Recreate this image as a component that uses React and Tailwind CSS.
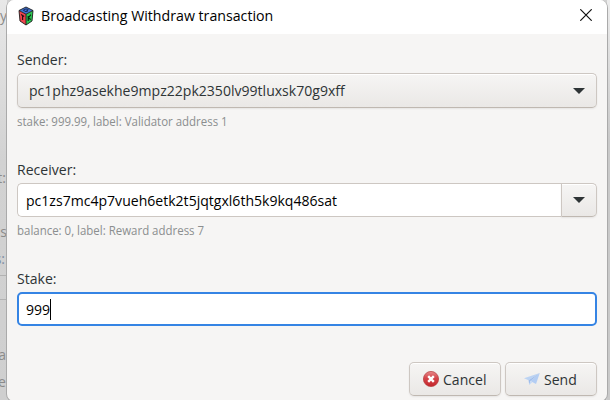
function GtkLogo() {
  return (
    <svg width="16" height="20" viewBox="0 0 16 20" className="shrink-0">
      <path d="M8 1 15 4.5 8 8.2 1 4.5Z" fill="#3f74d8" />
      <path d="M1 4.5 8 8.2V19L2 15Z" fill="#f0444c" />
      <path d="M15 4.5 8 8.2V19L14 15Z" fill="#2cc552" />
      <path d="M8 1 15 4.5 14 15 8 19 2 15 1 4.5ZM1 4.5 8 8.2 15 4.5M8 8.2V19" fill="none" stroke="#1c1c1c" strokeWidth="0.9" />
      <path d="M10.5 3.6 8 2.9 5.3 4.2 8 5.8 10 4.8 8.4 4.3" fill="none" stroke="#14234d" strokeWidth="0.9" />
      <path d="M3 8.6 6.2 10.4M4.6 9.6V14" stroke="#2c1012" strokeWidth="1.2" />
      <path d="M10.2 10V15M12.8 8.6 10.4 12 12.8 13.6" fill="none" stroke="#0a2b12" strokeWidth="1.2" />
    </svg>
  );
}

function Arrow() {
  return (
    <svg width="12" height="6" viewBox="0 0 12 6" className="shrink-0">
      <path d="M0 0H12L6 6Z" fill="#2e3436" />
    </svg>
  );
}

function CancelIcon() {
  return (
    <svg width="16" height="16" viewBox="0 0 16 16" className="shrink-0">
      <defs>
        <linearGradient id="red" x1="0" y1="0" x2="0" y2="1">
          <stop offset="0" stopColor="#e8898b" />
          <stop offset="0.45" stopColor="#d4454a" />
          <stop offset="1" stopColor="#c4262b" />
        </linearGradient>
      </defs>
      <circle cx="8" cy="8" r="7.6" fill="url(#red)" stroke="#b5393b" strokeWidth="0.7" />
      <path d="M5.2 5.2 10.8 10.8M10.8 5.2 5.2 10.8" stroke="#fff" strokeWidth="2.4" />
    </svg>
  );
}

function PlaneIcon() {
  return (
    <svg width="16" height="14" viewBox="0 0 16 14" className="shrink-0">
      <path d="M0 6.2 15.8 1 4.6 8.2Z" fill="#bcd3f3" />
      <path d="M15.8 1 6.4 9 12 12Z" fill="#b3cdf3" />
      <path d="M4.6 8.2 15.8 1 6.4 9 5.2 13Z" fill="#9dbdec" />
      <path d="M5.2 13 6.4 9 8.3 10.2Z" fill="#c6daf6" />
    </svg>
  );
}

const buttonFace =
  "border border-[#cdc7c2] border-b-[#bfb8b1] bg-linear-to-b from-[#f6f5f4] to-[#eae8e6] shadow-[inset_0_1px_0_#fff,0_1px_2px_rgba(0,0,0,0.07)]";

const narrow = "inline-block origin-left scale-x-[0.937]";
const narrowSmall = "inline-block origin-left scale-x-[0.917]";

export default function App() {
  return (
    <div className="relative h-[400px] w-[610px] overflow-hidden bg-[#d0d0d0] font-['Open_Sans','Noto_Sans',sans-serif] text-[15px] text-[#2e3436]">
      <div className="absolute inset-y-0 left-0 w-[7px] overflow-hidden bg-linear-to-b from-[#e8e8e8] via-[#d2d2d2] via-40% to-[#cfcfcf] text-[14px] leading-5 text-[#8b8b8b]">
        <span className="absolute top-[6px] right-0">y</span>
        <span className="absolute top-[168px] right-[1px]">t:</span>
        <span className="absolute top-[222px] right-0">s</span>
        <span className="absolute top-[249px] right-[2px] text-[#7f8fa4]">s:</span>
        <div className="absolute top-[275px] h-[25px] w-full border-y border-[#b2b2b2]" />
        <span className="absolute top-[345px] right-[1px]">a</span>
        <span className="absolute top-[372px] left-[-2px]">er</span>
      </div>
      <div className="absolute inset-y-0 right-0 w-[3px] bg-linear-to-b from-[#ececec] to-[#c9c9c9] to-35%" />

      <div className="relative ml-[6px] h-[402px] w-[602px] overflow-hidden rounded-[8px] border border-t-0 border-[#aaaaaa] bg-[#f6f5f4] whitespace-nowrap">
        <header className="flex h-[34px] items-center bg-white pr-[15px] pl-[11px] text-black">
          <div className="-mt-[3px] h-5">
            <GtkLogo />
          </div>
          <h1 className="-mt-[3px] ml-[7px] flex-1"><span className="inline-block origin-left scale-x-[0.945]">Broadcasting Withdraw transaction</span></h1>
          <svg width="12" height="12" viewBox="0 0 12 12" className="-mt-1">
            <path d="M0.3 0.3 11.7 11.7M11.7 0.3 0.3 11.7" stroke="#111" strokeWidth="1.2" />
          </svg>
        </header>

        <main className="px-[10px] pt-[15px]">
          <label className="block h-6 leading-[20px]"><span className={narrow}>Sender:</span></label>
          <div className={`flex h-[35px] items-center rounded-[5px] pr-[11px] pl-[11px] ${buttonFace}`}>
            <div className="flex-1"><span className={narrow}>pc1phz9asekhe9mpz22pk2350lv99tluxsk70g9xff</span></div>
            <Arrow />
          </div>
          <p className="h-[52px] pt-[5px] text-[12.5px] leading-[18px] text-[#8b8e8f]"><span className={narrowSmall}>stake: 999.99, label: Validator address 1</span></p>

          <label className="block h-[23px] leading-[18px]"><span className={narrow}>Receiver:</span></label>
          <div className="flex h-[34px]">
            <div className="flex flex-1 items-center rounded-l-[5px] border border-r-0 border-[#cdc7c2] bg-white pl-2 text-black">
              <span className={narrow}>pc1zs7mc4p7vueh6etk2t5jqtgxl6th5k9kq486sat</span>
            </div>
            <div className={`flex w-9 items-center justify-center rounded-r-[5px] ${buttonFace}`}>
              <Arrow />
            </div>
          </div>
          <p className="h-[52px] pt-[5px] text-[12.5px] leading-[18px] text-[#8b8e8f]"><span className={narrowSmall}>balance: 0, label: Reward address 7</span></p>

          <label className="block h-[23px] leading-[18px]"><span className={narrow}>Stake:</span></label>
          <div className="flex h-[34px] items-center rounded-[5px] border-2 border-[#3584e4] bg-white pl-[7px] text-black">
            <span className={narrow}>999</span>
            <i className="-ml-[2px] h-[21px] w-px bg-black" />
          </div>

          <footer className="mt-[36px] flex justify-end gap-[4px]">
            <button className={`flex h-[34px] w-[92px] items-center rounded-[5px] pl-[13px] ${buttonFace}`}>
              <CancelIcon />
              <span className={`ml-[4px] ${narrow}`}>Cancel</span>
            </button>
            <button className={`flex h-[34px] w-[92px] items-center rounded-[5px] pl-[18px] ${buttonFace}`}>
              <PlaneIcon />
              <span className={`ml-[4px] ${narrow}`}>Send</span>
            </button>
          </footer>
        </main>
      </div>
    </div>
  );
}
